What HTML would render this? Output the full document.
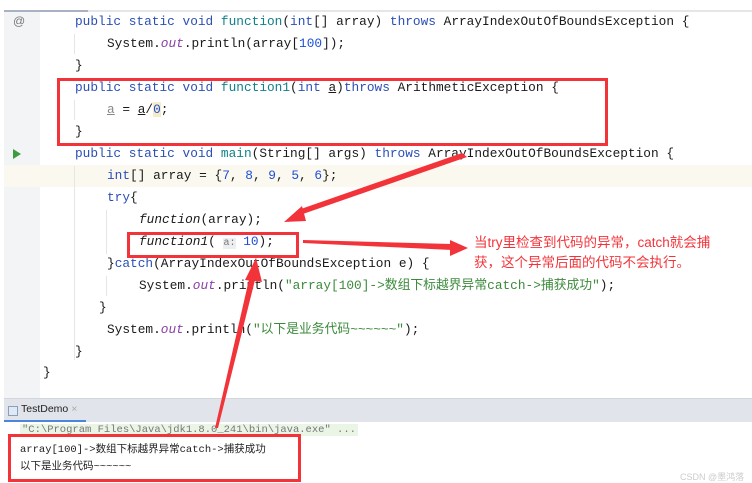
<!DOCTYPE html>
<html><head><meta charset="utf-8"><style>
body{margin:0;width:752px;height:482px;overflow:hidden;background:#fff;position:relative;font-family:"Liberation Mono","Noto Sans CJK SC",monospace;}
.topline{position:absolute;left:4px;top:10px;width:748px;height:2px;background:#e4e6ea;}
.topline2{position:absolute;left:4px;top:10px;width:84px;height:2px;background:#a9b2c3;}
.gutter{position:absolute;left:4px;top:12px;width:36px;height:386px;background:#f3f4f6;}
.hl{position:absolute;left:4px;top:165px;width:748px;height:22px;background:#fbf9ef;}
.ln{position:absolute;font-size:12.8px;color:#1a1a1a;white-space:pre;line-height:22px;}
.k{color:#2b4fb5}.f{color:#10808a}.n{color:#1d4fd6}.i{font-style:italic}.o{color:#8b3fa8;font-style:italic}.s{color:#3b8a3b}
.box{position:absolute;border:3px solid #f2343a;}
.panel{position:absolute;left:4px;top:398px;width:748px;height:23px;background:#e1e4ea;border-top:1px solid #d3d6dc;}
.tab{position:absolute;left:4px;top:398px;width:82px;height:23px;}
.con{position:absolute;font-size:10.5px;white-space:pre;}
.guide{position:absolute;width:1px;background:#e6e6e6;}
</style></head><body>
<div class="topline"></div><div class="topline2"></div>
<div class="gutter"></div>
<div class="hl"></div>
<div style="position:absolute;left:13px;top:14px;font-size:12px;color:#777;font-family:'Liberation Sans',sans-serif">@</div>
<svg style="position:absolute;left:12px;top:148px" width="10" height="12"><path d="M1 1 L9 6 L1 11Z" fill="#3f9b3f"/></svg>
<div class="guide" style="left:74px;top:34px;height:20px"></div>
<div class="guide" style="left:74px;top:100px;height:20px"></div>
<div class="guide" style="left:74px;top:166px;height:194px"></div>
<div class="guide" style="left:106px;top:210px;height:44px"></div>
<div class="guide" style="left:106px;top:276px;height:20px"></div>

<div class="ln" style="left:75px;top:11px"><span class="k">public static void </span><span class="f">function</span>(<span class="k">int</span>[] array) <span class="k">throws</span> ArrayIndexOutOfBoundsException {</div>
<div class="ln" style="left:107px;top:33px">System.<span class="o">out</span>.println(array[<span class="n">100</span>]);</div>
<div class="ln" style="left:75px;top:55px">}</div>
<div class="ln" style="left:75px;top:77px"><span class="k">public static void </span><span class="f">function1</span>(<span class="k">int</span> <u>a</u>)<span class="k">throws</span> ArithmeticException {</div>
<div class="ln" style="left:107px;top:99px"><u style="color:#888">a</u> = <u>a</u>/<span class="n" style="background:#f8ecc6">0</span>;</div>
<div class="ln" style="left:75px;top:121px">}</div>
<div class="ln" style="left:75px;top:143px"><span class="k">public static void </span><span class="f">main</span>(String[] args) <span class="k">throws</span> ArrayIndexOutOfBoundsException {</div>
<div class="ln" style="left:107px;top:165px"><span class="k">int</span>[] array = {<span class="n">7</span>, <span class="n">8</span>, <span class="n">9</span>, <span class="n">5</span>, <span class="n">6</span>};</div>
<div class="ln" style="left:107px;top:187px"><span class="k">try</span>{</div>
<div class="ln" style="left:139px;top:209px"><span class="i">function</span>(array);</div>
<div class="ln" style="left:139px;top:231px"><span class="i">function1</span>( <span style="background:#eceef1;color:#777;font-size:10px">a:</span> <span class="n">10</span>);</div>
<div class="ln" style="left:107px;top:253px">}<span class="k">catch</span>(ArrayIndexOutOfBoundsException e) {</div>
<div class="ln" style="left:139px;top:275px">System.<span class="o">out</span>.println(<span class="s">"array[100]-&gt;数组下标越界异常catch-&gt;捕获成功"</span>);</div>
<div class="ln" style="left:99px;top:297px">}</div>
<div class="ln" style="left:107px;top:319px">System.<span class="o">out</span>.println(<span class="s">"以下是业务代码~~~~~~"</span>);</div>
<div class="ln" style="left:75px;top:341px">}</div>
<div class="ln" style="left:43px;top:362px">}</div>

<div class="panel"></div>
<div style="position:absolute;left:4px;top:420px;width:82px;height:2px;background:#4a86d9"></div>
<div style="position:absolute;left:8px;top:406px;width:8px;height:8px;border:1px solid #8aa0b8;background:#dfe9f5"></div>
<div style="position:absolute;left:21px;top:403px;font-size:10.5px;font-family:'Liberation Sans',sans-serif;color:#222">TestDemo <span style="color:#aaa">×</span></div>
<div class="con" style="left:20px;top:424px;background:#eaf5e6;color:#777;padding:0 2px">"C:\Program Files\Java\jdk1.8.0_241\bin\java.exe" ...</div>
<div class="con" style="left:20px;top:441px;color:#222">array[100]-&gt;数组下标越界异常catch-&gt;捕获成功</div>
<div class="con" style="left:20px;top:458px;color:#222">以下是业务代码~~~~~~</div>
<div style="position:absolute;left:680px;top:470px;font-size:9px;color:#ccc;font-family:'Liberation Sans','Noto Sans CJK SC',sans-serif">CSDN @墨鸿落</div>

<div class="box" style="left:57px;top:78px;width:545px;height:62px"></div>
<div class="box" style="left:127px;top:232px;width:166px;height:20px"></div>
<div class="box" style="left:8px;top:434px;width:287px;height:42px"></div>

<div style="position:absolute;left:474px;top:233px;font-size:13.5px;line-height:20px;color:#f2343a;font-family:'Liberation Sans','Noto Sans CJK SC',sans-serif">当try里检查到代码的异常，catch就会捕<br>获，这个异常后面的代码不会执行。</div>

<svg style="position:absolute;left:0;top:0" width="752" height="482">
<polygon points="462,153 467,157 300,215 298,210" fill="#f2343a"/>
<polygon points="284,222 302,206 306,221" fill="#f2343a"/>
<polygon points="303,240 452,244 452,250 303,243" fill="#f2343a"/>
<polygon points="468,248 450,240 450,256" fill="#f2343a"/>
<polygon points="215,428 250,275 256,276 218,428" fill="#f2343a"/>
<polygon points="256,258 245,280 262,282" fill="#f2343a"/>
</svg>
</body></html>
